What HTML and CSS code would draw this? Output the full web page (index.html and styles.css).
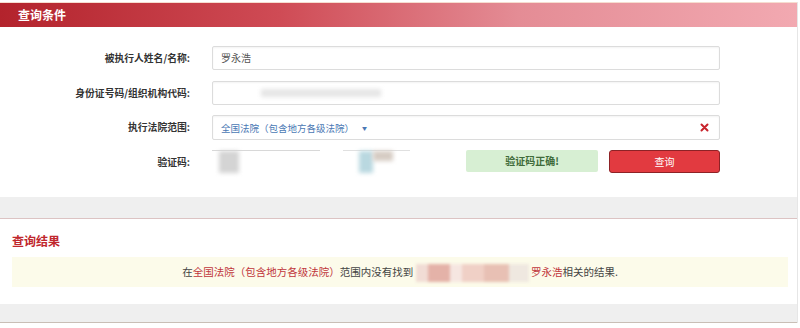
FILE: index.html
```html
<!DOCTYPE html>
<html>
<head>
  <title>查询条件</title>
  <link rel="stylesheet" href="styles.css">
</head>
<body>
  <div class="page">
    <div class="panel-head">查询条件</div>
    <div class="panel">
      <form class="query-form">
        <label class="field-label">被执行人姓名/名称:</label>
        <div class="field"><div class="text-box">罗永浩</div></div>

        <label class="field-label">身份证号码/组织机构代码:</label>
        <div class="field">
          <div class="text-box">
            <span class="blur blur-id"></span>
          </div>
        </div>

        <label class="field-label">执行法院范围:</label>
        <div class="field">
          <div class="text-box select-box">
            <span class="court">全国法院（包含地方各级法院）</span>
            <span class="caret">▼</span>
            <svg class="clear" width="9" height="9" viewBox="0 0 9 9">
              <path d="M1.5 1.5 L7.5 7.5 M7.5 1.5 L1.5 7.5" stroke="#c8242c" stroke-width="2" stroke-linecap="round"/>
            </svg>
          </div>
        </div>

        <label class="field-label">验证码:</label>
        <div class="field captcha-row">
          <div class="captcha-input">
            <span class="blur blur-gray"></span>
          </div>
          <div class="captcha-img">
            <span class="blur blur-cyan"></span>
            <span class="blur blur-tan"></span>
          </div>
          <div class="captcha-ok">验证码正确!</div>
          <button type="button" class="btn-query">查询</button>
        </div>
      </form>
    </div>

    <div class="gap-band"></div>

    <div class="result">
      <h3 class="result-title">查询结果</h3>
      <div class="result-msg">
        在<span class="hl">全国法院（包含地方各级法院）</span>范围内没有找到
        <span class="blur-mosaic">
          <i class="m1"></i><i class="m2"></i><i class="m3"></i><i class="m4"></i><i class="m5"></i><i class="m6"></i>
        </span>
        <span class="hl">罗永浩</span>相关的结果.
      </div>
    </div>

    <div class="gap-band bottom"></div>
  </div>
</body>
</html>
```

FILE: styles.css
```css
body {
  margin: 0;
  background-color: #ffffff;
  font-family: "Noto Sans CJK SC", "Liberation Sans", sans-serif;
  color: #333333;
}

.page {
  width: 797px;
  border-right: 1px solid #e6e6e6;
}

.panel-head {
  margin-top: 2px;
  height: 24px;
  line-height: 24px;
  padding-left: 18px;
  border-top: 1px solid #f6ddd0;
  background: linear-gradient(to right, #b3232c 0%, #cf4b55 35%, #e48c95 65%, #f2a9b1 100%);
  color: #ffffff;
  font-size: 12px;
  font-weight: bold;
}

.panel {
  background-color: #ffffff;
  padding: 19px 0 23px;
}

.query-form {
  display: grid;
  grid-template-columns: 190px 508px;
  grid-auto-rows: 24px;
  column-gap: 22px;
  row-gap: 10.5px;
  align-items: center;
}

.field-label {
  text-align: right;
  font-size: 9.8px;
  font-weight: bold;
  color: #333333;
}

.field {
  height: 24px;
}

.text-box {
  box-sizing: border-box;
  height: 24px;
  line-height: 22px;
  padding: 0 8px;
  border: 1px solid #dcdcdc;
  border-radius: 2px;
  box-shadow: inset 0 1px 2px rgba(0,0,0,0.05);
  font-size: 10px;
  color: #555555;
}

.select-box {
  display: flex;
  align-items: center;
  height: 25px;
}

.court {
  color: #4a78b4;
  font-size: 9.5px;
}

.caret {
  margin-left: 8px;
  font-size: 5px;
  color: #4a78b4;
}

.clear {
  margin-left: auto;
  margin-right: 2px;
}

.blur {
  display: inline-block;
  filter: blur(2px);
}

.blur-id {
  width: 120px;
  height: 8px;
  margin: 7px 0 0 40px;
  background-color: #e6e6e6;
  vertical-align: top;
}

.captcha-row {
  display: flex;
  align-items: flex-start;
}

.captcha-input {
  width: 108px;
  height: 24px;
  border-top: 1px solid #d8d8d8;
}

.blur-gray {
  width: 20px;
  height: 22px;
  margin-left: 7px;
  background-color: #d4d4d4;
}

.captcha-img {
  width: 67px;
  height: 24px;
  margin-left: 23px;
  border-top: 1px solid #e0e0e0;
  display: flex;
}

.blur-cyan {
  width: 14px;
  height: 22px;
  margin-left: 16px;
  background-color: #b9d8e0;
}

.blur-tan {
  width: 20px;
  height: 10px;
  background-color: #d6ccc3;
}

.captcha-ok {
  width: 132px;
  height: 22px;
  line-height: 22px;
  margin-left: 56px;
  background-color: #d7efd3;
  border-radius: 2px;
  text-align: center;
  color: #3f6b3a;
  font-size: 10px;
  font-weight: bold;
}

.btn-query {
  width: 111px;
  height: 23px;
  margin-left: 11px;
  padding: 0;
  background-color: #e23a40;
  border: 1px solid #8e2226;
  border-radius: 3px;
  color: #ffffff;
  font-family: inherit;
  font-size: 10px;
  cursor: pointer;
}

.gap-band {
  height: 21px;
  background-color: #efefef;
  border-bottom: 1px solid #dcc3c3;
}

.gap-band.bottom {
  height: 18px;
  border-bottom: 1px solid #c9beb6;
}

.result {
  background-color: #ffffff;
  padding: 14px 9px 17px 12px;
}

.result-title {
  margin: 0 0 8px;
  font-size: 12px;
  font-weight: bold;
  color: #c0272d;
  line-height: 16px;
}

.result-msg {
  height: 30px;
  line-height: 30px;
  background-color: #fcfbea;
  text-align: center;
  font-size: 10.5px;
  color: #444444;
}

.hl {
  color: #c0353b;
}

.blur-mosaic {
  display: inline-flex;
  vertical-align: middle;
  width: 113px;
  height: 18px;
  filter: blur(1.5px);
}

.blur-mosaic i {
  display: block;
  height: 18px;
}

.m1 { width: 12px; background-color: #f1dcd5; }
.m2 { width: 22px; background-color: #e4b2a8; }
.m3 { width: 12px; background-color: #f6e6e1; }
.m4 { width: 22px; background-color: #f0d0c6; }
.m5 { width: 25px; background-color: #e8c0b4; }
.m6 { width: 20px; background-color: #efe8e0; }
```
